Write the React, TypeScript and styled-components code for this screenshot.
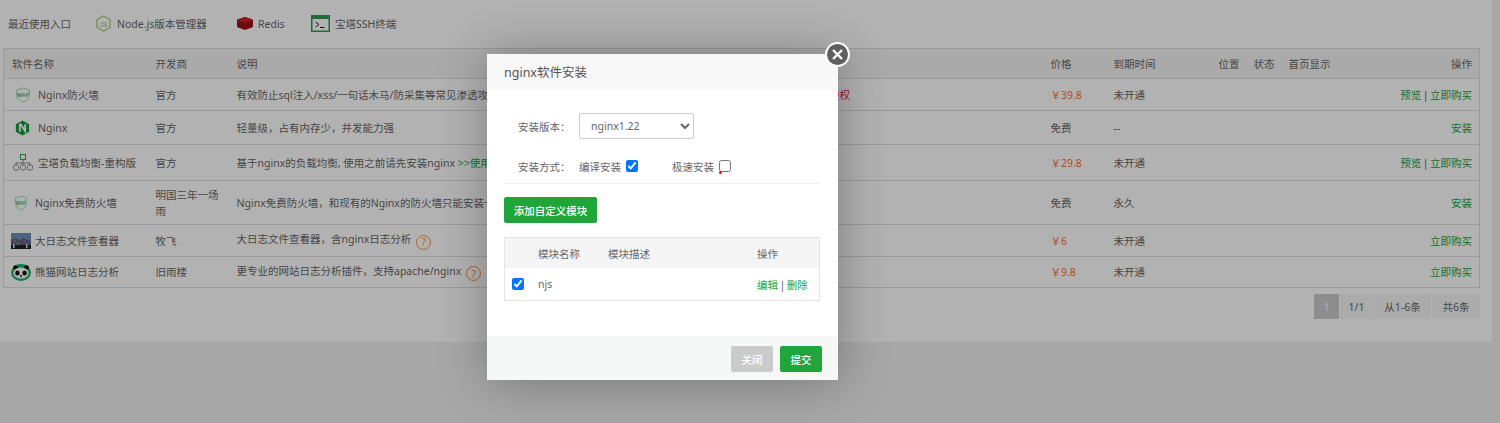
import React from "react";
import styled, { createGlobalStyle } from "styled-components";

const Global = createGlobalStyle`
  html, body { margin: 0; padding: 0; height: 423px; overflow: hidden; background: #f0f0f0; }
  body { font-family: "Noto Sans", "Noto Sans CJK SC", sans-serif; font-size: 10.5px; color: #666; }
  * { box-sizing: border-box; }
  svg { flex: none; }
`;

const Page = styled.div`
  position: relative;
  width: 1500px;
  height: 423px;
  overflow: hidden;
`;
const Panel = styled.div`
  width: 1492px;
  height: 342px;
  background: #fff;
  padding: 0 12px 0 3px;
`;
const Recent = styled.div`
  display: flex;
  align-items: center;
  height: 48px;
  padding: 0 0 1px 5px;
`;
const RecentItem = styled.span<{ $w: number; $gap: number }>`
  display: flex;
  align-items: center;
  gap: ${(p) => p.$gap}px;
  width: ${(p) => p.$w}px;
  color: #666;
  white-space: nowrap;
`;
const Grid = styled.table`
  width: 1477px;
  border-collapse: collapse;
  table-layout: fixed;
  border: 1px solid #ddd;
  font-size: 10.5px;
`;
const Head = styled.tr`
  height: 30px;
  background: #f4f4f4;
`;
const Th = styled.th<{ $right?: boolean }>`
  font-weight: 400;
  color: #666;
  padding: ${(p) => (p.$right ? "0 7px 0 8px" : "0 8px")};
  text-align: ${(p) => (p.$right ? "right" : "left")};
  white-space: nowrap;
`;
const Row = styled.tr<{ $h: number }>`
  height: ${(p) => p.$h}px;
  border-top: 1px solid #ddd;
`;
const Td = styled.td<{ $right?: boolean }>`
  padding: ${(p) => (p.$right ? "0 7px 0 8px" : "0 8px")};
  line-height: 16px;
  color: #666;
  overflow: hidden;
  text-align: ${(p) => (p.$right ? "right" : "left")};
`;
const DescCell = styled(Td)`
  white-space: nowrap;
`;
const NameBox = styled.span<{ $gap: number; $ml: number }>`
  display: flex;
  align-items: center;
  gap: ${(p) => p.$gap}px;
  margin-left: ${(p) => p.$ml}px;
  white-space: nowrap;
`;
const Red = styled.span`
  margin-left: 5px;
  color: #e0223c;
`;
const Price = styled.span`
  color: #fc6d26;
`;
const GreenLink = styled.a`
  color: #20a53a;
`;
const Sep = styled.span`
  color: #555;
  margin: 0 1.5px;
`;
const Help = styled.span`
  display: inline-flex;
  align-items: center;
  justify-content: center;
  width: 15px;
  height: 15px;
  margin-left: 5px;
  border: 1.5px solid #fc8d36;
  border-radius: 50%;
  color: #fc8d36;
  font-size: 10.5px;
  line-height: 1;
  vertical-align: -3px;
`;
const Pager = styled.div`
  display: flex;
  justify-content: flex-end;
  width: 1477px;
  margin-top: 6px;
`;
const PageCell = styled.span<{ $w: number; $on?: boolean }>`
  display: flex;
  align-items: center;
  justify-content: center;
  width: ${(p) => p.$w}px;
  height: 25px;
  margin-left: 1px;
  background: ${(p) => (p.$on ? "#cbcbcb" : "#f5f5f5")};
  color: ${(p) => (p.$on ? "#fff" : "#666")};
`;
const Shade = styled.div`
  position: absolute;
  inset: 0;
  background: rgba(0, 0, 0, 0.3);
`;
const Dialog = styled.div`
  position: absolute;
  left: 487px;
  top: 54px;
  width: 351px;
  height: 326px;
  background: #fff;
  box-shadow: 1px 1px 50px rgba(0, 0, 0, 0.3);
  border-radius: 2px;
  display: flex;
  flex-direction: column;
`;
const DialogTitle = styled.div`
  height: 36px;
  flex: none;
  padding: 9px 0 0 17px;
  font-size: 12.5px;
  line-height: 20px;
  color: #555;
  background: #f8f8f8;
`;
const Close = styled.span`
  position: absolute;
  top: -12px;
  right: -12px;
  width: 25px;
  height: 25px;
  border-radius: 50%;
  border: 2px solid #fff;
  background: #5f5f5f;
  display: flex;
  align-items: center;
  justify-content: center;
`;
const Body = styled.div`
  flex: 1;
  padding: 23px 18px 0 17px;
`;
const FormRow = styled.div`
  display: flex;
  align-items: center;
  height: 26px;
  color: #666;
`;
const FormLabel = styled.span`
  width: 61px;
  margin-left: 14px;
  white-space: nowrap;
`;
const FormGap = styled.div`
  height: 14px;
`;
const VersionSelect = styled.select`
  width: 115px;
  height: 26px;
  margin: 0;
  padding: 0 0 0 7px;
  font-family: "Noto Sans", sans-serif;
  font-size: 10.5px;
  color: #666;
  background: #fff;
  border: 1px solid #ccc;
  border-radius: 2px;
  outline: none;
`;
const Check = styled.input`
  display: block;
  width: 12px;
  height: 12px;
  margin: 0;
  accent-color: #0075ff;
`;
const MethodText = styled.label<{ $w: number }>`
  display: flex;
  align-items: center;
  gap: 5px;
  width: ${(p) => p.$w}px;
  white-space: nowrap;
`;
const Unchecked = styled.span`
  position: relative;
  display: inline-block;
  width: 12px;
  height: 12px;
`;
const RedDot = styled.i`
  position: absolute;
  left: 0;
  bottom: -2px;
  width: 3px;
  height: 3px;
  border-radius: 50%;
  background: #e01010;
`;
const Rule = styled.div`
  height: 1px;
  margin-top: 4px;
  background: #eee;
`;
const AddBtn = styled.button`
  display: block;
  width: 93px;
  height: 26px;
  margin: 13px 0 14px;
  padding: 0;
  border: 1px solid #20a53a;
  border-radius: 2px;
  background: #20a53a;
  color: #fff;
  font: inherit;
  font-weight: 500;
`;
const ModuleTable = styled.div`
  border: 1px solid #e4e4e4;
  height: 64px;
`;
const ModuleHead = styled.div`
  display: grid;
  grid-template-columns: 33px 70px 149px 1fr;
  align-items: center;
  height: 30px;
  background: #f5f5f5;
`;
const ModuleRow = styled.div`
  display: grid;
  grid-template-columns: 33px 70px 149px 1fr;
  align-items: center;
  height: 32px;
`;
const CheckCell = styled.span`
  display: flex;
  padding-left: 7px;
`;
const Footer = styled.div`
  flex: none;
  height: 44px;
  display: flex;
  justify-content: flex-end;
  align-items: flex-start;
  gap: 7px;
  padding: 10px 16px 0 0;
  background: #f6f8f8;
`;
const FootBtn = styled.button<{ $green?: boolean }>`
  width: 42px;
  height: 26px;
  padding: 0;
  border: 0;
  border-radius: 2px;
  background: ${(p) => (p.$green ? "#20a53a" : "#cbcbcb")};
  color: #fff;
  font: inherit;
  font-weight: 500;
`;

const WafIcon = ({ w = 16, h = 16 }: { w?: number; h?: number }) => (
  <svg width={w} height={h} viewBox="0 0 18 18" fill="none" preserveAspectRatio="none">
    <path d="M9 1 16 3.5V9.5C16 13 13 15.5 9 17 5 15.5 2 13 2 9.5V3.5Z" stroke="#8fd3a0" strokeWidth="1" />
    <text x="9" y="11" textAnchor="middle" fontSize="6" fontWeight="700" fill="#4fb268" fontFamily="Liberation Sans">WAF</text>
  </svg>
);
const NginxIcon = () => (
  <svg width="15" height="16" viewBox="0 0 16 18">
    <path d="M8 .5 15.5 4.7V13.3L8 17.5.5 13.3V4.7Z" fill="#169a3c" />
    <path d="M5 13.2V5h1L11 12.5V4.8" stroke="#fff" strokeWidth="2" fill="none" />
  </svg>
);
const LbIcon = () => (
  <svg width="20" height="17" viewBox="0 0 20 17" fill="none" stroke="#888" strokeWidth="1">
    <rect x="7.5" y=".5" width="5" height="5" stroke="#2aa84a" />
    <path d="M10 5.5v3.5M3 11V9h14v2M10 9v2" />
    <rect x=".5" y="11" width="5" height="5" rx="1.5" />
    <rect x="7.5" y="11" width="5" height="5" rx="1.5" />
    <rect x="14.5" y="11" width="5" height="5" rx="1.5" />
  </svg>
);
const NodeIcon = () => (
  <svg width="15" height="17" viewBox="0 0 15 17" fill="none">
    <path d="M7.5 1 14 4.5V12.5L7.5 16 1 12.5V4.5Z" stroke="#a9c463" strokeWidth="1.2" />
    <text x="7.5" y="11.5" textAnchor="middle" fontSize="7" fill="#a9b96a" fontFamily="Liberation Sans">JS</text>
  </svg>
);
const RedisIcon = () => (
  <svg width="16" height="13" viewBox="0 0 16 13">
    <path d="M8 0 15 2.2Q16 2.6 16 3.5V9Q16 10 15 10.5L8 13 1 10.5Q0 10 0 9V3.5Q0 2.6 1 2.2Z" fill="#a01419" />
    <path d="M8 0 15 2.2Q16 2.6 15 3.2L8 6 1 3.2Q0 2.6 1 2.2Z" fill="#c4262a" />
    <path d="M0 6.6 8 9.6 16 6.6" stroke="#7c0e12" strokeWidth=".7" fill="none" />
  </svg>
);
const TermIcon = () => (
  <svg width="19" height="17" viewBox="0 0 19 17" fill="none">
    <rect x=".75" y=".75" width="17.5" height="15.5" fill="#fff" stroke="#2f9d4c" strokeWidth="1.5" />
    <rect x="0" y="0" width="19" height="4" fill="#2f9d4c" />
    <path d="M4.5 7 8 9.5 4.5 12" stroke="#222" strokeWidth="1" />
    <path d="M9 12.5h4.5" stroke="#222" strokeWidth="1" />
  </svg>
);
const PhotoIcon = () => (
  <svg width="20" height="16" viewBox="0 0 20 16">
    <rect width="20" height="16" fill="#6f8fb8" />
    <path d="M0 7 4 5l4 2 4-2 8 3v8H0Z" fill="#5d6481" />
    <circle cx="4" cy="8" r="1.2" fill="#b06a8a" />
    <circle cx="9" cy="7" r="1" fill="#c07a70" />
    <circle cx="14" cy="8.5" r="1.3" fill="#8a6a9e" />
    <rect x="6" y="9" width="2" height="3" fill="#6f9a78" />
    <rect y="12" width="20" height="4" fill="#1d2421" />
    <rect x="2" y="11" width="1.5" height="4" fill="#d8d8e0" />
    <rect x="15" y="11" width="1.5" height="4" fill="#d8d8e0" />
  </svg>
);
const PandaIcon = () => (
  <svg width="20" height="17" viewBox="0 0 20 17">
    <ellipse cx="10" cy="8.5" rx="10" ry="8.5" fill="#19b56b" />
    <circle cx="4.5" cy="3.6" r="2.4" fill="#111" />
    <circle cx="15.5" cy="3.6" r="2.4" fill="#111" />
    <ellipse cx="10" cy="9" rx="7.6" ry="5.6" fill="#fff" />
    <ellipse cx="6.4" cy="9" rx="2.2" ry="2.5" fill="#111" />
    <ellipse cx="13.6" cy="9" rx="2.2" ry="2.5" fill="#111" />
    <circle cx="10" cy="12" r="1" fill="#111" />
  </svg>
);

type R = {
  h: number; gap: number; ml: number; icon: React.ReactNode; name: string; dev: string;
  desc: React.ReactNode; price: React.ReactNode; exp: string; op: React.ReactNode;
};
const Buy = <GreenLink>立即购买</GreenLink>;
const Preview = (
  <>
    <GreenLink>预览</GreenLink>
    <Sep>|</Sep>
    {Buy}
  </>
);
const Install = <GreenLink>安装</GreenLink>;
const rows: R[] = [
  { h: 32, gap: 7, ml: 3, icon: <WafIcon />, name: "Nginx防火墙", dev: "官方",
    desc: <>有效防止sql注入/xss/一句话木马/防采集等常见渗透攻击，有效防护网站数据安全，支持多个站点独立规则设置，<Red>购买后可永久授权</Red></>,
    price: <Price>￥39.8</Price>, exp: "未开通", op: Preview },
  { h: 34, gap: 8, ml: 3, icon: <NginxIcon />, name: "Nginx", dev: "官方", desc: "轻量级，占有内存少，并发能力强", price: "免费", exp: "--", op: Install },
  { h: 36, gap: 5, ml: 1, icon: <LbIcon />, name: "宝塔负载均衡-重构版", dev: "官方",
    desc: <>基于nginx的负载均衡, 使用之前请先安装nginx <GreenLink>&gt;&gt;使用帮助</GreenLink></>,
    price: <Price>￥29.8</Price>, exp: "未开通", op: Preview },
  { h: 44, gap: 7, ml: 2, icon: <WafIcon w={14} h={16} />, name: "Nginx免费防火墙", dev: "明国三年一场雨",
    desc: "Nginx免费防火墙，和现有的Nginx的防火墙只能安装一个", price: "免费", exp: "永久", op: Install },
  { h: 32, gap: 4, ml: -1, icon: <PhotoIcon />, name: "大日志文件查看器", dev: "牧飞",
    desc: <>大日志文件查看器，含nginx日志分析<Help>?</Help></>, price: <Price>￥6</Price>, exp: "未开通", op: Buy },
  { h: 31, gap: 4, ml: -1, icon: <PandaIcon />, name: "熊猫网站日志分析", dev: "旧雨楼",
    desc: <>更专业的网站日志分析插件，支持apache/nginx<Help>?</Help></>, price: <Price>￥9.8</Price>, exp: "未开通", op: Buy },
];

export default function App() {
  return (
    <Page>
      <Global />
      <Panel>
        <Recent>
          <RecentItem $w={88} $gap={0}>最近使用入口</RecentItem>
          <RecentItem $w={141} $gap={6}><NodeIcon />Node.js版本管理器</RecentItem>
          <RecentItem $w={74} $gap={5}><RedisIcon />Redis</RecentItem>
          <RecentItem $w={110} $gap={5}><TermIcon />宝塔SSH终端</RecentItem>
        </Recent>
        <Grid>
          <colgroup>
            <col style={{ width: 144 }} />
            <col style={{ width: 81 }} />
            <col style={{ width: 814 }} />
            <col style={{ width: 63 }} />
            <col style={{ width: 105 }} />
            <col style={{ width: 35 }} />
            <col style={{ width: 35 }} />
            <col style={{ width: 60 }} />
            <col />
          </colgroup>
          <thead>
            <Head>
              <Th>软件名称</Th>
              <Th>开发商</Th>
              <Th>说明</Th>
              <Th>价格</Th>
              <Th>到期时间</Th>
              <Th>位置</Th>
              <Th>状态</Th>
              <Th>首页显示</Th>
              <Th $right>操作</Th>
            </Head>
          </thead>
          <tbody>
            {rows.map((r) => (
              <Row key={r.name} $h={r.h}>
                <Td>
                  <NameBox $gap={r.gap} $ml={r.ml}>{r.icon}{r.name}</NameBox>
                </Td>
                <Td>{r.dev}</Td>
                <DescCell>{r.desc}</DescCell>
                <Td>{r.price}</Td>
                <Td>{r.exp}</Td>
                <Td />
                <Td />
                <Td />
                <Td $right>{r.op}</Td>
              </Row>
            ))}
          </tbody>
        </Grid>
        <Pager>
          <PageCell $w={25} $on>1</PageCell>
          <PageCell $w={33}>1/1</PageCell>
          <PageCell $w={57}>从1-6条</PageCell>
          <PageCell $w={48}>共6条</PageCell>
        </Pager>
      </Panel>
      <Shade />
      <Dialog>
        <DialogTitle>nginx软件安装</DialogTitle>
        <Close>
          <svg width="11" height="11" viewBox="0 0 11 11">
            <path d="M1 1 10 10M10 1 1 10" stroke="#fff" strokeWidth="2.4" />
          </svg>
        </Close>
        <Body>
          <FormRow>
            <FormLabel>安装版本：</FormLabel>
            <VersionSelect defaultValue="1.22">
              <option value="1.22">nginx1.22</option>
            </VersionSelect>
          </FormRow>
          <FormGap />
          <FormRow>
            <FormLabel>安装方式：</FormLabel>
            <MethodText $w={93}>编译安装<Check type="checkbox" defaultChecked /></MethodText>
            <MethodText $w={90}>
              极速安装
              <Unchecked>
                <Check type="checkbox" />
                <RedDot />
              </Unchecked>
            </MethodText>
          </FormRow>
          <Rule />
          <AddBtn>添加自定义模块</AddBtn>
          <ModuleTable>
            <ModuleHead>
              <span />
              <span>模块名称</span>
              <span>模块描述</span>
              <span>操作</span>
            </ModuleHead>
            <ModuleRow>
              <CheckCell><Check type="checkbox" defaultChecked /></CheckCell>
              <span>njs</span>
              <span />
              <span>
                <GreenLink>编辑</GreenLink>
                <Sep>|</Sep>
                <GreenLink>删除</GreenLink>
              </span>
            </ModuleRow>
          </ModuleTable>
        </Body>
        <Footer>
          <FootBtn>关闭</FootBtn>
          <FootBtn $green>提交</FootBtn>
        </Footer>
      </Dialog>
    </Page>
  );
}
